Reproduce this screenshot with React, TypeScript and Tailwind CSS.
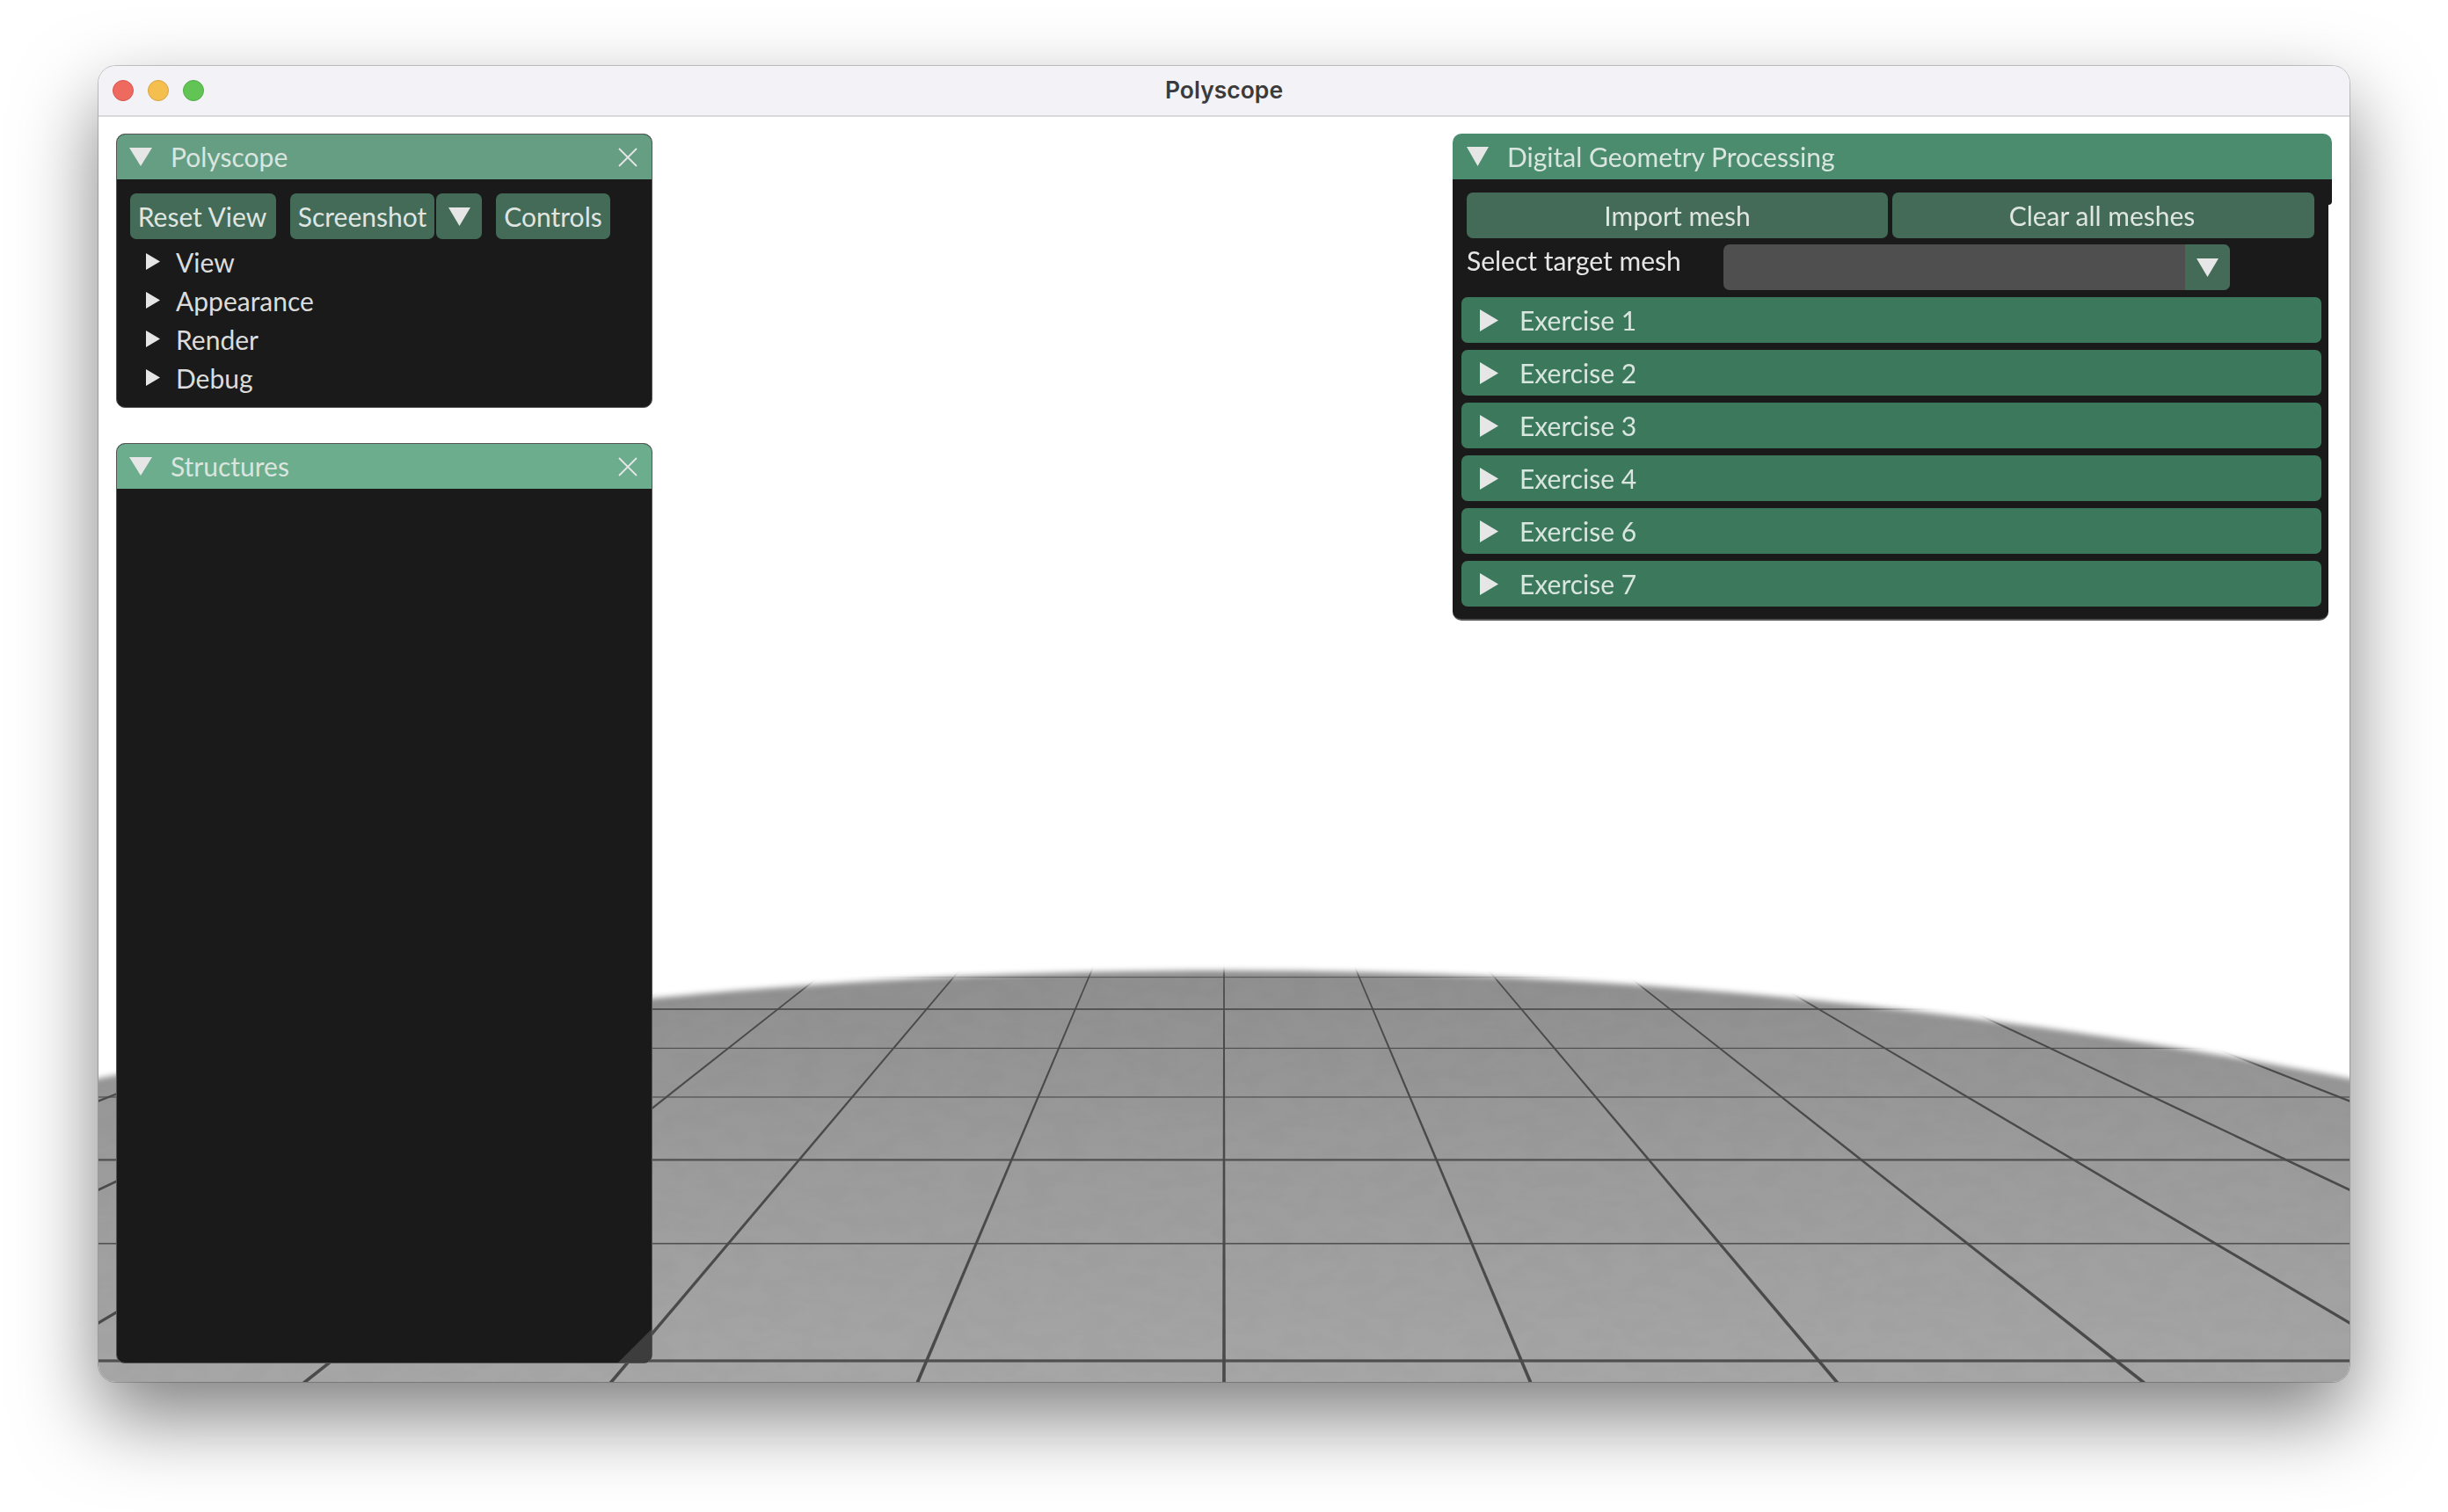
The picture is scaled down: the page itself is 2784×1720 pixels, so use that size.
import React from 'react'

const font = { fontFamily: 'Lato, "Open Sans", sans-serif' }

// vanishing point of the ground grid, in page pixels
const VX = 1392
const VY = 748
const SLOPE = 0.4228
const BOTTOM = 1572

const radials = Array.from({ length: 29 }, (_, i) => i - 14)
// [row index, line height] - the lines alternate in weight in the picture
const rows: [number, number][] = [
    [5, 3.2],
    [6, 1.6],
    [7, 2.2],
    [8, 1.2],
    [9, 1.2],
    [10, 1.8],
    [11, 1],
]

function thickness(y: number) {
    return (y - VY) * 0.0045
}

function radialPoints(i: number) {
    const top = 1090
    const x = (y: number) => VX + i * SLOPE * (y - VY)
    const stretch = Math.sqrt(1 + (i * SLOPE) ** 2)
    const a = (thickness(top) * stretch) / 2
    const b = (thickness(BOTTOM) * stretch) / 2
    return `${x(top) - a},${top} ${x(top) + a},${top} ${x(BOTTOM) + b},${BOTTOM} ${x(BOTTOM) - b},${BOTTOM}`
}

function horizonPath() {
    const pts: string[] = []
    for (let x = -40; x <= 2840; x += 40) {
        const dx = x - VX
        pts.push(`${x},${1104 + 0.000075 * dx * dx}`)
    }
    return `M${pts.join(' L')} L2840,1700 L-40,1700 Z`
}

function Floor() {
    return (
        <svg className="absolute inset-0 h-full w-full" viewBox="112 133 2560 1439" preserveAspectRatio="none">
            <defs>
                <linearGradient id="ground" x1="0" y1="1104" x2="0" y2="1572" gradientUnits="userSpaceOnUse">
                    <stop offset="0" stopColor="#8f8f8f" />
                    <stop offset="0.45" stopColor="#9b9b9b" />
                    <stop offset="1" stopColor="#a6a6a6" />
                </linearGradient>
                <filter id="soft" filterUnits="userSpaceOnUse" x="-100" y="1000" width="3000" height="800">
                    <feGaussianBlur stdDeviation="3" />
                </filter>
                <filter id="mottle">
                    <feTurbulence type="fractalNoise" baseFrequency="0.03 0.06" numOctaves="3" seed="4" />
                    <feColorMatrix values="0 0 0 0 0  0 0 0 0 0  0 0 0 0 0  0 0 0 0.3 -0.1" />
                </filter>
                <mask id="horizon" maskUnits="userSpaceOnUse" x="0" y="1000" width="2800" height="640">
                    <path d={horizonPath()} fill="white" filter="url(#soft)" />
                </mask>
            </defs>
            <g mask="url(#horizon)">
                <rect x="100" y="1000" width="2600" height="600" fill="url(#ground)" />
                <rect x="100" y="1000" width="2600" height="600" filter="url(#mottle)" opacity="0.1" />
                {rows.map(([n, h]) => {
                    const y = VY + 4000 / n
                    return <rect key={n} x="100" y={y - h / 2} width="2600" height={h} fill="#4f4f4f" />
                })}
                {radials.map((i) => (
                    <polygon key={i} points={radialPoints(i)} fill="#4a4a4a" />
                ))}
            </g>
        </svg>
    )
}

function Tri({ dir, className }: { dir: 'down' | 'right'; className: string }) {
    return (
        <svg className={className} viewBox="0 0 10 10" preserveAspectRatio="none">
            <polygon points={dir === 'down' ? '0,0 10,0 5,10' : '0,0 10,5 0,10'} fill="#e6e6e6" />
        </svg>
    )
}

function CloseX() {
    return (
        <svg className="ml-auto h-[22px] w-[22px]" viewBox="0 0 22 22">
            <path d="M1 1 L21 21 M21 1 L1 21" stroke="#e6e6e6" strokeWidth="1.8" fill="none" />
        </svg>
    )
}

function Btn({ children, className }: { children: React.ReactNode; className: string }) {
    return (
        <div className={`flex h-[52px] items-center justify-center rounded-[7px] bg-[#436b58] text-[30px] text-[#dfe5e1] ${className}`}>
            {children}
        </div>
    )
}

const treeItems = ['View', 'Appearance', 'Render', 'Debug']
const exercises = ['Exercise 1', 'Exercise 2', 'Exercise 3', 'Exercise 4', 'Exercise 6', 'Exercise 7']

function PolyscopePanel() {
    return (
        <div className="h-[312px] overflow-hidden rounded-[10px] border border-[#555] bg-[#1a1a1a]">
            <div className="flex h-[51px] items-center bg-[#669e84] pr-[16px] pl-[14px] text-[30px] text-[#d9e5df]">
                <Tri dir="down" className="mr-[21px] h-[21px] w-[26px]" />
                <span>Polyscope</span>
                <CloseX />
            </div>
            <div className="flex pt-[16px] pl-[15px]">
                <Btn className="mr-[16px] w-[166px] pr-[2px]">Reset View</Btn>
                <Btn className="mr-[2px] w-[164px]">Screenshot</Btn>
                <Btn className="mr-[16px] w-[52px]">
                    <Tri dir="down" className="h-[21px] w-[25px]" />
                </Btn>
                <Btn className="w-[130px]">Controls</Btn>
            </div>
            <div className="pt-[4px]">
                {treeItems.map((t) => (
                    <div key={t} className="flex h-[44px] items-center pl-[33px] text-[30px] text-[#dcdcdc]">
                        <Tri dir="right" className="mr-[18px] mb-[2px] h-[19px] w-[16px]" />
                        {t}
                    </div>
                ))}
            </div>
        </div>
    )
}

function StructuresPanel() {
    return (
        <div className="relative mt-[40px] h-[1047px] overflow-hidden rounded-[10px] border border-[#555] bg-[#1a1a1a]">
            <div className="flex h-[51px] items-center bg-[#6bad8d] pr-[16px] pl-[14px] text-[30px] text-[#d9e5df]">
                <Tri dir="down" className="mr-[21px] h-[21px] w-[26px]" />
                <span>Structures</span>
                <CloseX />
            </div>
            {/* resize grip */}
            <svg className="absolute right-0 bottom-0 h-[38px] w-[38px]" viewBox="0 0 38 38">
                <polygon points="38,0 38,38 0,38" fill="#3d3d3d" />
            </svg>
        </div>
    )
}

function GeometryPanel() {
    return (
        <div className="w-[1000px]">
            <div className="flex h-[52px] items-center rounded-t-[10px] bg-[#4a8c6d] pl-[16px] text-[30px] text-[#d9e5df]">
                <Tri dir="down" className="mr-[21px] h-[22px] w-[25px]" />
                <span>Digital Geometry Processing</span>
            </div>
            <div className="flex items-start">
                <div className="h-[502px] w-[996px] rounded-b-[10px] border-b-2 border-[#555] bg-[#1a1a1a] pt-[15px] pl-[10px]">
                    <div className="flex gap-[5px] pl-[6px]">
                        <Btn className="w-[479px]">Import mesh</Btn>
                        <Btn className="w-[480px] pr-[3px]">Clear all meshes</Btn>
                    </div>
                    <div className="mt-[7px] flex h-[52px] pl-[6px]">
                        <span className="w-[292px] text-[30px] leading-[36px] text-[#e6e6e6]">Select target mesh</span>
                        <div className="flex w-[576px] overflow-hidden rounded-[7px] bg-[#4f4f4f]">
                            <div className="ml-auto flex w-[51px] items-center justify-center bg-[#436b58]">
                                <Tri dir="down" className="h-[21px] w-[25px]" />
                            </div>
                        </div>
                    </div>
                    <div className="mt-[8px] flex w-[978px] flex-col gap-[8px]">
                        {exercises.map((e) => (
                            <div key={e} className="flex h-[52px] items-center rounded-[7px] bg-[#3c785b] pl-[21px] text-[30px] text-[#d9e5df]">
                                <Tri dir="right" className="mr-[24px] h-[25px] w-[21px]" />
                                {e}
                            </div>
                        ))}
                    </div>
                </div>
                <div className="h-[29px] w-[4px] rounded-br-[4px] bg-[#1a1a1a]" />
            </div>
        </div>
    )
}

export default function App() {
    return (
        <div className="h-[1720px] w-[2784px] overflow-hidden bg-white pt-[75px] pl-[112px]" style={font}>
            <div className="flex h-[1497px] w-[2560px] flex-col overflow-hidden rounded-[20px] bg-white shadow-[0_40px_90px_rgba(0,0,0,0.5)] ring-1 ring-black/20">
                <div className="relative flex h-[58px] shrink-0 items-center border-b-2 border-[#d9d9dc] bg-[#f2f2f7]">
                    <div className="flex gap-[16px] pl-[16px]">
                        <span className="h-[24px] w-[24px] rounded-full border border-[#d9544d] bg-[#ee6a5f]" />
                        <span className="h-[24px] w-[24px] rounded-full border border-[#d8a33f] bg-[#f5bf4f]" />
                        <span className="h-[24px] w-[24px] rounded-full border border-[#4fae44] bg-[#61c454]" />
                    </div>
                    <span className="absolute inset-x-0 text-center font-['Inter'] text-[26.5px] font-semibold text-[#3b3b3d]">Polyscope</span>
                </div>
                <div className="relative flex-1">
                    <Floor />
                    <div className="relative flex items-start justify-between pt-[19px] pr-[20px] pl-[20px] blur-[0.5px]">
                        <div className="w-[610px]">
                            <PolyscopePanel />
                            <StructuresPanel />
                        </div>
                        <GeometryPanel />
                    </div>
                </div>
            </div>
        </div>
    )
}
